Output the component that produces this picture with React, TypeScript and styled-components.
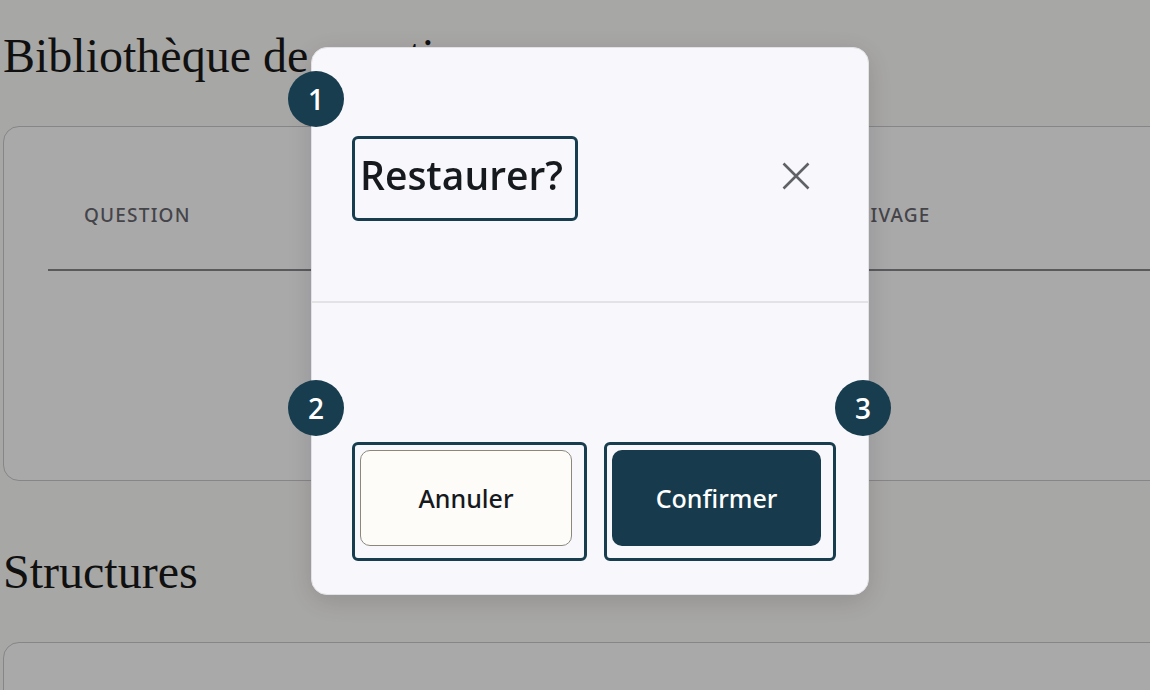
import React from "react";
import styled, { createGlobalStyle } from "styled-components";

const GlobalStyle = createGlobalStyle`
  html, body {
    margin: 0;
    padding: 0;
    width: 1150px;
    height: 690px;
    overflow: hidden;
    background: #f0efec;
  }
  * { box-sizing: border-box; }
`;

const Page = styled.main`
  padding: 27px 0 0 3px;
  width: 1400px;
  font-family: "Open Sans", "Noto Sans", sans-serif;
`;

const Section = styled.section<{ $gap?: number }>`
  margin-top: ${(p) => p.$gap ?? 0}px;
`;

const PageTitle = styled.h1`
  margin: 0 0 41px;
  font-family: "Liberation Serif", serif;
  font-weight: 400;
  font-size: 48px;
  line-height: 58px;
  color: #181818;
`;

const Card = styled.div`
  width: 1380px;
  border: 1.5px solid #c0bfc2;
  border-radius: 16px;
  background: #f3f2f4;
  padding: 44px;
`;

const HeaderRow = styled.div`
  display: grid;
  grid-template-columns: 731px 1fr;
  border-bottom: 2px solid #818186;
`;

const HeaderCell = styled.div`
  padding: 29px 36px 39px;
  font-family: "Noto Sans", "Open Sans", sans-serif;
  font-size: 19px;
  line-height: 30px;
  font-weight: 500;
  letter-spacing: 1.2px;
  text-transform: uppercase;
  color: #626269;
`;

const EmptyBody = styled.div`
  height: 165px;
`;

const Overlay = styled.div`
  position: fixed;
  inset: 0;
  background: rgba(0, 0, 0, 0.3);
  display: flex;
  align-items: flex-start;
  justify-content: flex-start;
  padding: 47px 0 0 311px;
  font-family: "Open Sans", "Noto Sans", sans-serif;
`;

const Modal = styled.div`
  width: 558px;
  background: #f8f8fc;
  border: 1px solid #e2e2e6;
  border-radius: 16px;
  box-shadow: 0 6px 28px rgba(0, 0, 0, 0.14);
`;

const ModalHeader = styled.header`
  display: flex;
  align-items: center;
  justify-content: space-between;
  padding: 88px 58px 80px 40px;
  border-bottom: 2px solid #e3e3e5;
`;

const ModalBody = styled.div`
  height: 139px;
`;

const ModalFooter = styled.footer`
  display: flex;
  justify-content: flex-end;
  gap: 17px;
  padding: 0 32px 33px 40px;
`;

const Marked = styled.div`
  position: relative;
  border: 3px solid #173d4f;
  border-radius: 6px;
  padding: 5px 12px 12px 5px;
`;

const Badge = styled.span<{ $side: "left" | "right"; $top: number }>`
  position: absolute;
  top: ${(p) => p.$top}px;
  ${(p) => (p.$side === "left" ? "left: -67px;" : "right: -58px;")}
  width: 56px;
  height: 56px;
  border-radius: 50%;
  background: #173d4f;
  color: #ffffff;
  display: flex;
  align-items: center;
  justify-content: center;
  font-size: 28px;
  font-weight: 600;
  line-height: 1;
`;

const Title = styled.h2`
  margin: 0;
  font-size: 39px;
  line-height: 62px;
  font-weight: 600;
  color: #16191d;
`;

const CloseButton = styled.button`
  width: 28px;
  height: 28px;
  padding: 0;
  margin-bottom: 6px;
  border: none;
  background: transparent;
  display: flex;
  align-items: center;
  justify-content: center;
  color: #5f6166;
  cursor: pointer;
`;

const Button = styled.button<{ $primary?: boolean; $width: number }>`
  display: block;
  width: ${(p) => p.$width}px;
  height: 96px;
  border-radius: 10px;
  font-family: "Noto Sans", "Open Sans", sans-serif;
  font-size: 25px;
  font-weight: 500;
  cursor: pointer;
  border: ${(p) => (p.$primary ? "none" : "1.5px solid #8b887a")};
  background: ${(p) => (p.$primary ? "#173b4c" : "#fdfcf9")};
  color: ${(p) => (p.$primary ? "#ffffff" : "#16191d")};
`;

export default function App() {
  return (
    <>
      <GlobalStyle />
      <Page>
        <Section>
          <PageTitle>Bibliothèque de questions</PageTitle>
          <Card>
            <HeaderRow>
              <HeaderCell>Question</HeaderCell>
              <HeaderCell>Archivage</HeaderCell>
            </HeaderRow>
            <EmptyBody />
          </Card>
        </Section>
        <Section $gap={62}>
          <PageTitle>Structures</PageTitle>
          <Card />
        </Section>
      </Page>
      <Overlay>
        <Modal role="dialog" aria-modal="true">
          <ModalHeader>
            <Marked>
              <Badge $side="left" $top={-68}>1</Badge>
              <Title>Restaurer?</Title>
            </Marked>
            <CloseButton aria-label="Fermer">
              <svg width="28" height="28" viewBox="0 0 28 28" fill="none">
                <path d="M1.5 1.5 L26.5 26.5 M26.5 1.5 L1.5 26.5" stroke="currentColor" strokeWidth="2.6" />
              </svg>
            </CloseButton>
          </ModalHeader>
          <ModalBody />
          <ModalFooter>
            <Marked>
              <Badge $side="left" $top={-65}>2</Badge>
              <Button $width={212}>Annuler</Button>
            </Marked>
            <Marked>
              <Badge $side="right" $top={-65}>3</Badge>
              <Button $primary $width={209}>Confirmer</Button>
            </Marked>
          </ModalFooter>
        </Modal>
      </Overlay>
    </>
  );
}
